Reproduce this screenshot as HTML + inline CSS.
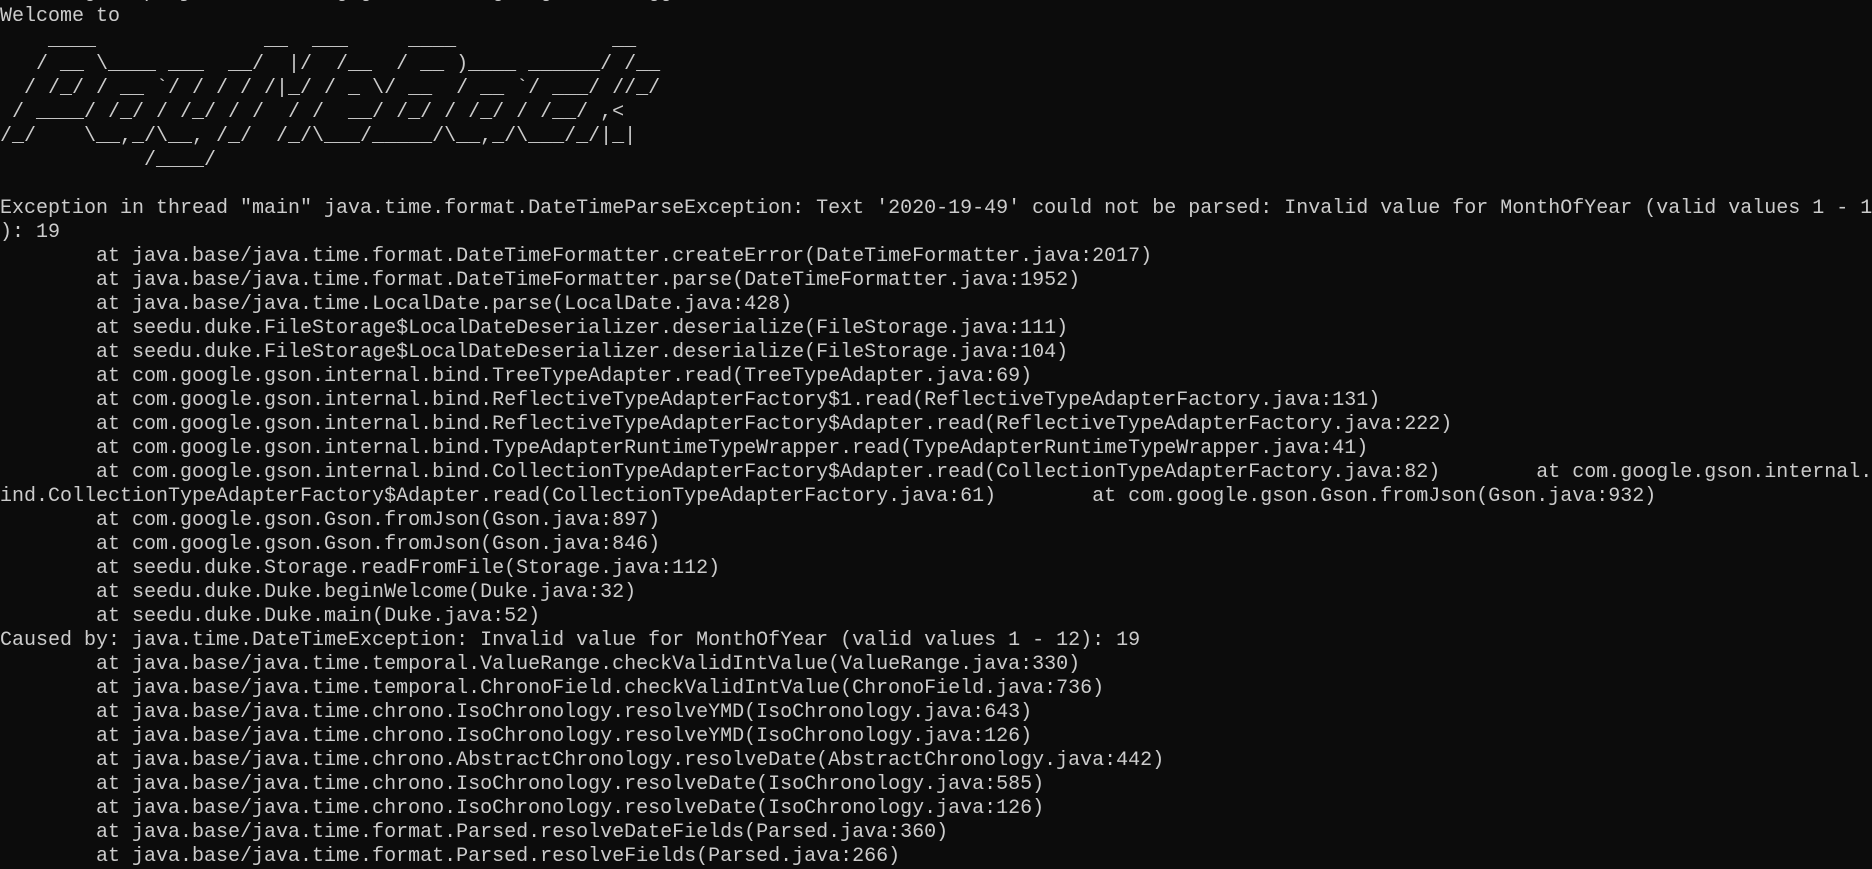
<!DOCTYPE html>
<html><head><meta charset="utf-8"><style>
html,body{margin:0;padding:0;background:#0c0c0c;width:1872px;height:852px;overflow:hidden;}
pre{position:absolute;left:0;top:-19px;margin:0;font-family:"Liberation Mono","Noto Sans CJK SC",monospace;font-size:20px;line-height:24px;color:#cccccc;white-space:pre;}
</style></head><body><pre>&gt; Configure project : Running gradle...  going  ...   gg
Welcome to
    ____              __  ___     ____             __
   / __ \____ ___  __/  |/  /__  / __ )____ ______/ /__
  / /_/ / __ `/ / / / /|_/ / _ \/ __  / __ `/ ___/ //_/
 / ____/ /_/ / /_/ / /  / /  __/ /_/ / /_/ / /__/ ,&lt;
/_/    \__,_/\__, /_/  /_/\___/_____/\__,_/\___/_/|_|
            /____/

Exception in thread "main" java.time.format.DateTimeParseException: Text '2020-19-49' could not be parsed: Invalid value for MonthOfYear (valid values 1 - 12
): 19
        at java.base/java.time.format.DateTimeFormatter.createError(DateTimeFormatter.java:2017)
        at java.base/java.time.format.DateTimeFormatter.parse(DateTimeFormatter.java:1952)
        at java.base/java.time.LocalDate.parse(LocalDate.java:428)
        at seedu.duke.FileStorage$LocalDateDeserializer.deserialize(FileStorage.java:111)
        at seedu.duke.FileStorage$LocalDateDeserializer.deserialize(FileStorage.java:104)
        at com.google.gson.internal.bind.TreeTypeAdapter.read(TreeTypeAdapter.java:69)
        at com.google.gson.internal.bind.ReflectiveTypeAdapterFactory$1.read(ReflectiveTypeAdapterFactory.java:131)
        at com.google.gson.internal.bind.ReflectiveTypeAdapterFactory$Adapter.read(ReflectiveTypeAdapterFactory.java:222)
        at com.google.gson.internal.bind.TypeAdapterRuntimeTypeWrapper.read(TypeAdapterRuntimeTypeWrapper.java:41)
        at com.google.gson.internal.bind.CollectionTypeAdapterFactory$Adapter.read(CollectionTypeAdapterFactory.java:82)        at com.google.gson.internal.b
ind.CollectionTypeAdapterFactory$Adapter.read(CollectionTypeAdapterFactory.java:61)        at com.google.gson.Gson.fromJson(Gson.java:932)
        at com.google.gson.Gson.fromJson(Gson.java:897)
        at com.google.gson.Gson.fromJson(Gson.java:846)
        at seedu.duke.Storage.readFromFile(Storage.java:112)
        at seedu.duke.Duke.beginWelcome(Duke.java:32)
        at seedu.duke.Duke.main(Duke.java:52)
Caused by: java.time.DateTimeException: Invalid value for MonthOfYear (valid values 1 - 12): 19
        at java.base/java.time.temporal.ValueRange.checkValidIntValue(ValueRange.java:330)
        at java.base/java.time.temporal.ChronoField.checkValidIntValue(ChronoField.java:736)
        at java.base/java.time.chrono.IsoChronology.resolveYMD(IsoChronology.java:643)
        at java.base/java.time.chrono.IsoChronology.resolveYMD(IsoChronology.java:126)
        at java.base/java.time.chrono.AbstractChronology.resolveDate(AbstractChronology.java:442)
        at java.base/java.time.chrono.IsoChronology.resolveDate(IsoChronology.java:585)
        at java.base/java.time.chrono.IsoChronology.resolveDate(IsoChronology.java:126)
        at java.base/java.time.format.Parsed.resolveDateFields(Parsed.java:360)
        at java.base/java.time.format.Parsed.resolveFields(Parsed.java:266)
</pre></body></html>
